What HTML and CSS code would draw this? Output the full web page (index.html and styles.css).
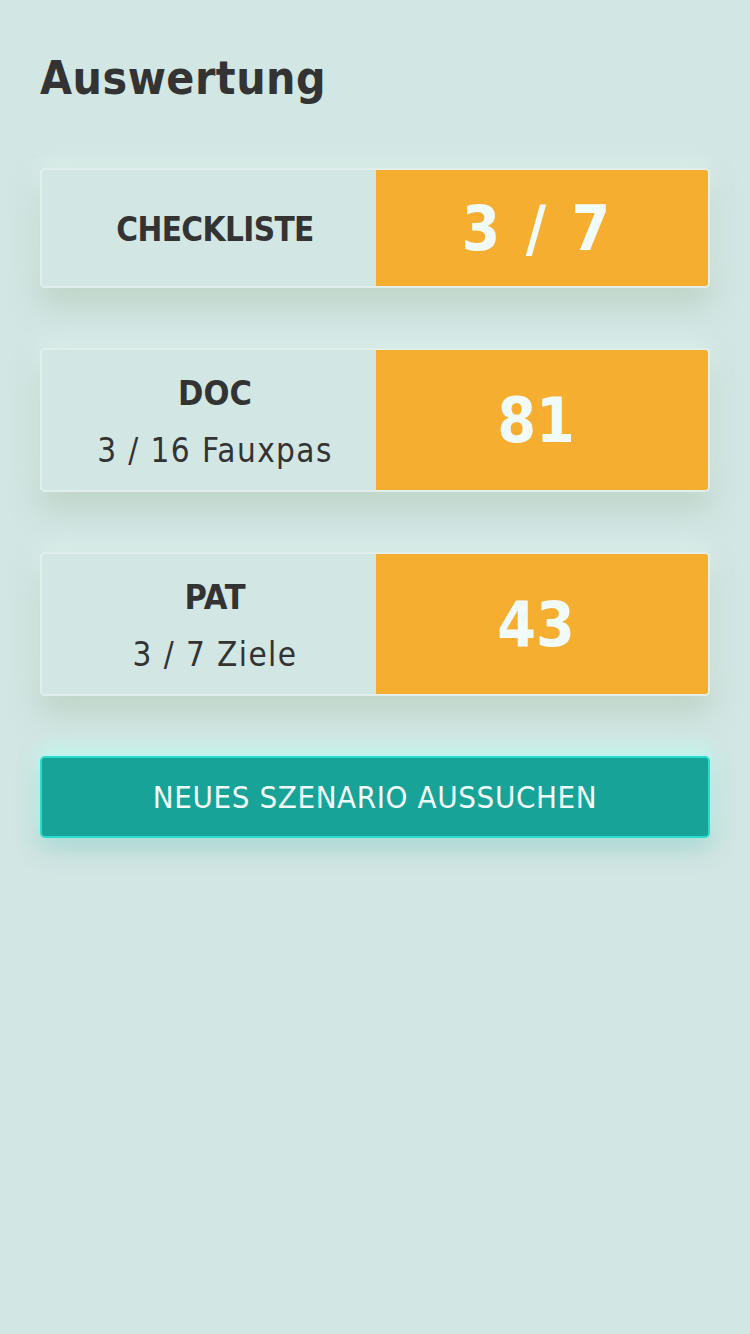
FILE: index.html
```html
<!DOCTYPE html>
<html lang="de">
<head>
    <meta charset="UTF-8">
    <meta name="viewport" content="width=device-width, initial-scale=1.0">
    <title>Auswertung</title>
    <link rel="stylesheet" href="styles.css">
</head>
<body>
    <main class="page">
        <h1 class="title">Auswertung</h1>

        <!-- Ergebnisse -->
        <div class="card card-small">
            <div class="card-label">
                <span class="label-head label-narrow">CHECKLISTE</span>
            </div>
            <div class="card-score">3 / 7</div>
        </div>

        <div class="card">
            <div class="card-label">
                <span class="label-head">DOC</span>
                <span class="label-sub">3 / 16 Fauxpas</span>
            </div>
            <div class="card-score">81</div>
        </div>

        <div class="card">
            <div class="card-label">
                <span class="label-head">PAT</span>
                <span class="label-sub">3 / 7 Ziele</span>
            </div>
            <div class="card-score">43</div>
        </div>

        <button class="btn-next">NEUES SZENARIO AUSSUCHEN</button>
    </main>
</body>
</html>
```

FILE: styles.css
```css
body {
    margin: 0;
    background-color: #d2e6e4;
    font-family: 'DejaVu Sans Condensed', 'DejaVu Sans', sans-serif;
    color: #333;
}

.page {
    padding: 48px 40px 40px 40px;
    display: flex;
    flex-direction: column;
}

.title {
    margin: 0 0 60px 0;
    font-size: 46px;
    font-weight: bold;
    line-height: 60px;
    letter-spacing: 0.5px;
    color: #333;
}

.card {
    display: flex;
    height: 120px;
    margin-bottom: 60px;
    border: 2px solid #e0efee;
    border-radius: 5px;
    overflow: hidden;
    box-sizing: border-box;
    box-shadow: 0 16px 30px rgba(150, 175, 140, 0.35), 0 -6px 24px rgba(230, 250, 245, 0.6);
}

.card + .card {
    height: 144px;
}

.card-label {
    width: 334px;
    padding-left: 12px;
    padding-top: 4px;
    box-sizing: border-box;
    background-color: #d2e6e4;
    display: flex;
    flex-direction: column;
    align-items: center;
    justify-content: center;
    gap: 22px;
}

.label-head {
    font-size: 34px;
    font-weight: bold;
    line-height: 36px;
}

.label-narrow {
    font-size: 33px;
    letter-spacing: -0.6px;
}

.label-sub {
    font-size: 33px;
    line-height: 36px;
    letter-spacing: 1.4px;
}

.card-score {
    flex: 1;
    padding-right: 12px;
    background-color: #f5ae30;
    color: #f0fbfa;
    font-size: 62px;
    font-weight: bold;
    word-spacing: 6px;
    display: flex;
    align-items: center;
    justify-content: center;
}

.btn-next {
    height: 82px;
    background-color: #17a398;
    border: 2px solid #2adccb;
    border-radius: 5px;
    color: #f0fbfa;
    font-family: inherit;
    font-size: 31px;
    letter-spacing: 0.6px;
    box-shadow: 0 -8px 20px rgba(190, 255, 245, 0.8), 0 10px 24px rgba(80, 180, 170, 0.35);
}
```
